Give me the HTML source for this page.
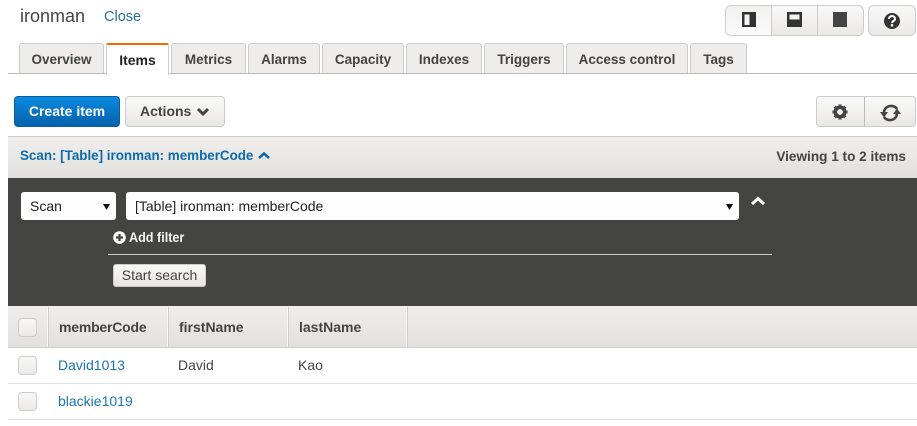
<!DOCTYPE html>
<html><head><meta charset="utf-8">
<style>
html,body{margin:0;padding:0;background:#fff}
body{width:917px;height:426px;position:relative;overflow:hidden;font-family:"Liberation Sans",sans-serif;color:#444}
.a{position:absolute;white-space:nowrap}
.tab{position:absolute;top:43px;height:30px;box-sizing:border-box;background:#eeedec;border:1px solid #ccc;border-bottom:0;border-radius:3px 3px 0 0;font-weight:bold;font-size:13.5px;line-height:31px;text-align:center;color:#444}
.btn{position:absolute;box-sizing:border-box;background:linear-gradient(#f9f9f9,#e9e8e5);border:1px solid #ccc;border-radius:4px}
.cb{position:absolute;left:18px;width:19px;height:19px;box-sizing:border-box;border:1px solid #ccc;border-radius:4px;background:linear-gradient(#f7f7f6,#ebeae8)}
.th{position:absolute;top:319px;font-weight:bold;font-size:14px;line-height:16px;color:#444}
.div{position:absolute;top:307px;height:40px;width:1px;background:#ccc;box-shadow:-1px 0 0 #f8f8f7}
.td{position:absolute;font-size:14px;line-height:16px}
.ln{color:#1b75b5}
</style></head><body>

<div class="a" style="left:20px;top:5px;font-size:18px;line-height:22px;color:#444">ironman</div>
<div class="a" style="left:104px;top:9px;font-size:14.5px;line-height:16px;color:#26709f">Close</div>

<!-- layout buttons -->
<div class="btn" style="left:725px;top:5px;width:139px;height:31px;border-radius:6px;overflow:hidden">
  <div style="position:absolute;left:0;top:0;width:45px;height:29px;background:linear-gradient(#f0f0ef,#fbfbfb);border-right:1px solid #ccc"></div>
  <div style="position:absolute;left:91px;top:0;width:1px;height:29px;background:#ccc"></div>
</div>
<svg class="a" style="left:725px;top:5px" width="139" height="31">
  <path fill="#333" fill-rule="evenodd" d="M17 7h14v15H17zM19.500 9.500v10.500h5V9.500z"/>
  <path fill="#333" fill-rule="evenodd" d="M62 7h15v15H62zM64.500 9.500v5h10v-5z"/>
  <rect x="108" y="7" width="14" height="15" fill="#444"/>
</svg>
<div class="btn" style="left:868px;top:5px;width:48px;height:31px;border-radius:6px"></div>
<svg class="a" style="left:883px;top:12px" width="18" height="18" viewBox="0 0 18 18">
  <circle cx="9" cy="9" r="8" fill="#333"/>
  <path d="M6 7c0-4 6-4 6 0 0 2-3 2-3 4" fill="none" stroke="#fff" stroke-width="2"/>
  <rect x="7.800" y="12.200" width="2.400" height="2.300" fill="#fff"/>
</svg>

<!-- tabs -->
<div class="a" style="left:8px;top:73px;width:909px;height:1px;background:#bbb"></div>
<div class="tab" style="left:19px;width:85px">Overview</div>
<div class="tab" style="left:106px;width:63px;height:32px;background:#fff;border-top:2px solid #f60;line-height:30px;color:#222;border-radius:2px 2px 0 0;font-size:14px">Items</div>
<div class="tab" style="left:171px;width:75px">Metrics</div>
<div class="tab" style="left:248px;width:72px">Alarms</div>
<div class="tab" style="left:322px;width:82px">Capacity</div>
<div class="tab" style="left:406px;width:76px">Indexes</div>
<div class="tab" style="left:484px;width:80px">Triggers</div>
<div class="tab" style="left:566px;width:122px">Access control</div>
<div class="tab" style="left:690px;width:57px">Tags</div>

<!-- toolbar -->
<div class="a" style="left:14px;top:96px;width:106px;height:31px;box-sizing:border-box;background:linear-gradient(#0a8adf,#0561ad);border:1px solid #0a5a9e;border-radius:4px;color:#fff;font-weight:bold;font-size:14px;line-height:28px;text-align:center">Create item</div>
<div class="btn" style="left:125px;top:96px;width:100px;height:31px;font-weight:bold;font-size:14px;line-height:28px;padding-left:14px;color:#444">Actions</div>
<svg class="a" style="left:196px;top:107px" width="14" height="10"><path d="M2 2l5 5 5-5" fill="none" stroke="#444" stroke-width="3"/></svg>

<div class="btn" style="left:816px;top:96px;width:100px;height:31px">
  <div style="position:absolute;left:47px;top:0;width:1px;height:29px;background:#bbb"></div>
</div>
<svg class="a" style="left:832px;top:104px" width="16" height="16" viewBox="0 0 16 16">
  <circle cx="8" cy="8" r="4.700" fill="none" stroke="#444" stroke-width="3.600"/>
  <g stroke="#444" stroke-width="3"><path d="M8 .5v3M8 12.500v3M.5 8h3M12.500 8h3M2.700 2.700l2 2M11.300 11.300l2 2M13.300 2.700l-2 2M4.700 11.300l-2 2"/></g>
</svg>
<svg class="a" style="left:880px;top:103px" width="21" height="20" viewBox="0 0 21 20">
  <path d="M4 10c0-8 10-9 13-4M17 10c0 8-10 9-13 4" fill="none" stroke="#444" stroke-width="2.600"/>
  <path d="M0 9h8L4 14.500zM13 11h8L17 5.500z" fill="#444"/>
</svg>

<!-- scan bar -->
<div class="a" style="left:8px;top:136px;width:909px;height:42px;box-sizing:border-box;border-top:1px solid #ccc;background:linear-gradient(#efeeec,#e1e0dc)"></div>
<div class="a" style="left:20px;top:148px;font-weight:bold;font-size:13.400px;line-height:16px;color:#0e6bab">Scan: [Table] ironman: memberCode</div>
<svg class="a" style="left:257px;top:151px" width="14" height="10"><path d="M2 7l5-4.500 5 4.500" fill="none" stroke="#0e6bab" stroke-width="2.600"/></svg>
<div class="a" style="right:11px;top:149px;font-weight:bold;font-size:13.600px;line-height:16px;color:#444">Viewing 1 to 2 items</div>

<!-- dark panel -->
<div class="a" style="left:8px;top:178px;width:909px;height:128px;background:#444442"></div>
<div class="a" style="left:21px;top:192px;width:95px;height:28px;background:#fdfdfd;border-radius:3px;font-size:14px;line-height:28px;color:#222;text-indent:9px">Scan</div>
<div class="a" style="left:126px;top:192px;width:613px;height:28px;background:#fdfdfd;border-radius:3px;font-size:14px;line-height:28px;color:#222;text-indent:9px">[Table] ironman: memberCode</div>
<svg class="a" style="left:102px;top:202px" width="10" height="9"><path d="M1 2h7L4.500 8z" fill="#111"/></svg>
<svg class="a" style="left:725px;top:202px" width="10" height="9"><path d="M1 2h7L4.500 8z" fill="#111"/></svg>
<svg class="a" style="left:750px;top:195px" width="16" height="12"><path d="M2 9l6-5.500 6 5.500" fill="none" stroke="#fff" stroke-width="3"/></svg>
<svg class="a" style="left:113px;top:231px" width="13" height="13" viewBox="0 0 13 13">
  <circle cx="6.500" cy="6.500" r="6.300" fill="#fff"/><path d="M6.500 3v7M3 6.500h7" stroke="#444" stroke-width="2.200"/>
</svg>
<div class="a" style="left:129px;top:229px;font-weight:bold;font-size:14px;line-height:16px;color:#f4f4f4;transform-origin:0 0;transform:scaleX(.9)">Add filter</div>
<div class="a" style="left:108px;top:254px;width:664px;height:1px;background:#ccc"></div>
<div class="a" style="left:113px;top:264px;width:93px;height:23px;box-sizing:border-box;background:linear-gradient(#f9f9f9,#e6e5e3);border:1px solid #ccc;border-radius:3px;font-size:14px;line-height:21px;text-align:center;color:#444">Start search</div>

<!-- table header -->
<div class="a" style="left:8px;top:306px;width:909px;height:42px;box-sizing:border-box;border-bottom:1px solid #ccc;background:linear-gradient(#efeeec,#e2e1de)"></div>
<div class="div" style="left:48px"></div>
<div class="div" style="left:168px"></div>
<div class="div" style="left:288px"></div>
<div class="div" style="left:407px"></div>
<div class="cb" style="top:318px"></div>
<div class="th" style="left:59px;letter-spacing:-.2px">memberCode</div>
<div class="th" style="left:179px">firstName</div>
<div class="th" style="left:299px">lastName</div>

<!-- rows -->
<div class="cb" style="top:356px"></div>
<div class="td ln" style="left:58px;top:357px">David1013</div>
<div class="td" style="left:178px;top:357px">David</div>
<div class="td" style="left:298px;top:357px">Kao</div>
<div class="a" style="left:8px;top:383px;width:909px;height:1px;background:#e2e2e2"></div>
<div class="cb" style="top:392px"></div>
<div class="td ln" style="left:58px;top:393px">blackie1019</div>
<div class="a" style="left:8px;top:419px;width:909px;height:1px;background:#e2e2e2"></div>

</body></html>
